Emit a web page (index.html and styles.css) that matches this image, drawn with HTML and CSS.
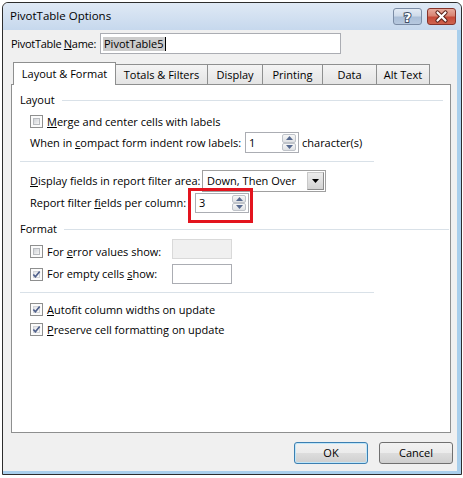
FILE: index.html
```html
<!DOCTYPE html>
<html>
<head>
<meta charset="utf-8">
<title>PivotTable Options</title>
<link rel="stylesheet" href="styles.css">
</head>
<body>
<div class="window">
  <div class="titlebar">
    <span class="title">PivotTable Options</span>
    <div class="caption-btns">
      <div class="cbtn help">
        <svg width="27" height="15" viewBox="0 0 27 15"><text x="13.5" y="12.5" text-anchor="middle" class="help-glyph">?</text></svg>
      </div>
      <div class="cbtn close">
        <svg width="27" height="15" viewBox="0 0 27 15">
          <path d="M9.5 3.5 L17.5 11.5 M17.5 3.5 L9.5 11.5" stroke="#5a2018" stroke-width="4.2" stroke-linecap="round"/>
          <path d="M9.5 3.5 L17.5 11.5 M17.5 3.5 L9.5 11.5" stroke="#ffffff" stroke-width="2.2" stroke-linecap="round"/>
        </svg>
      </div>
    </div>
  </div>
  <div class="client">
    <div class="name-row">
      <span class="name-label">PivotTable <u>N</u>ame:</span>
      <div class="textbox name-box"><span class="sel">PivotTable5</span><span class="caret"></span></div>
    </div>
    <div class="tabs">
      <div class="tab active w-layout">Layout &amp; Format</div>
      <div class="tab w-totals">Totals &amp; Filters</div>
      <div class="tab w-display">Display</div>
      <div class="tab w-printing">Printing</div>
      <div class="tab w-data">Data</div>
      <div class="tab w-alt">Alt Text</div>
    </div>
    <div class="panel">
      <div class="legend legend-layout">Layout</div>
      <div class="check-row r-merge">
        <span class="cb"></span><span><u>M</u>erge and center cells with labels</span>
      </div>
      <div class="field-row r-compact">
        <span class="lbl w-compact">When in <u>c</u>ompact form indent row labels:</span>
        <div class="textbox spin">
          <span class="spin-val">1</span>
          <div class="spin-btns">
            <span class="spin-btn"><svg width="7" height="4" viewBox="0 0 7 4"><path d="M0 4 L3.5 0 L7 4 Z" fill="#56698f"/></svg></span>
            <span class="spin-btn"><svg width="7" height="4" viewBox="0 0 7 4"><path d="M0 0 L3.5 4 L7 0 Z" fill="#56698f"/></svg></span>
          </div>
        </div>
        <span class="after">character(s)</span>
      </div>
      <div class="sep sep-1"></div>
      <div class="field-row r-display">
        <span class="lbl w-display-lbl"><u>D</u>isplay fields in report filter area:</span>
        <div class="combo">
          <span class="combo-val">Down, Then Over</span>
          <span class="combo-btn"><svg width="7" height="4" viewBox="0 0 7 4"><path d="M0 0 L3.5 4 L7 0 Z" fill="#000"/></svg></span>
        </div>
      </div>
      <div class="field-row r-report">
        <span class="lbl w-report">Report filter <u>f</u>ields per column:</span>
        <div class="spin-wrap">
          <div class="textbox spin spin-report">
            <span class="spin-val">3</span>
            <div class="spin-btns">
              <span class="spin-btn"><svg width="7" height="4" viewBox="0 0 7 4"><path d="M0 4 L3.5 0 L7 4 Z" fill="#56698f"/></svg></span>
              <span class="spin-btn"><svg width="7" height="4" viewBox="0 0 7 4"><path d="M0 0 L3.5 4 L7 0 Z" fill="#56698f"/></svg></span>
            </div>
          </div>
          <div class="highlight"></div>
        </div>
      </div>
      <div class="legend legend-format">Format</div>
      <div class="field-row r-error">
        <div class="check-lbl w-fmt shift">
          <span class="cb"></span><span>For <u>e</u>rror values show:</span>
        </div>
        <div class="textbox small-box disabled"></div>
      </div>
      <div class="field-row r-empty">
        <div class="check-lbl w-fmt">
          <span class="cb checked"><svg width="13" height="13" viewBox="0 0 13 13"><path d="M3.3 6.5 L5.4 8.7 L9.7 3.5" fill="none" stroke="#50618c" stroke-width="1.7"/></svg></span><span>For empty cells <u>s</u>how:</span>
        </div>
        <div class="textbox small-box"></div>
      </div>
      <div class="sep sep-2"></div>
      <div class="check-row r-autofit">
        <span class="cb checked"><svg width="13" height="13" viewBox="0 0 13 13"><path d="M3.3 6.5 L5.4 8.7 L9.7 3.5" fill="none" stroke="#50618c" stroke-width="1.7"/></svg></span><span><u>A</u>utofit column widths on update</span>
      </div>
      <div class="check-row r-preserve">
        <span class="cb checked"><svg width="13" height="13" viewBox="0 0 13 13"><path d="M3.3 6.5 L5.4 8.7 L9.7 3.5" fill="none" stroke="#50618c" stroke-width="1.7"/></svg></span><span><u>P</u>reserve cell formatting on update</span>
      </div>
    </div>
    <div class="buttons">
      <button class="btn default">OK</button>
      <button class="btn">Cancel</button>
    </div>
  </div>
</div>
</body>
</html>
```
FILE: styles.css
```css
*, *::before, *::after { box-sizing: border-box; }
html, body { margin: 0; padding: 0; background: #ffffff; }
body {
  font-family: "Open Sans", "Noto Sans", sans-serif;
  font-size: 11px;
  line-height: 14px;
  color: #000;
  white-space: nowrap;
}
u { text-decoration: underline; text-underline-offset: 1px; }

.window {
  margin: 2px 0 0 2px;
  width: 460px;
  height: 473px;
  border: 1px solid #2d2d2d;
  border-radius: 6px 6px 0 0;
  background: #f0f0f0;
  box-shadow: inset -4px -3px 0 #a9cfec;
  display: flex;
  flex-direction: column;
  overflow: hidden;
}

.titlebar {
  flex: none;
  height: 27px;
  display: flex;
  align-items: center;
  justify-content: space-between;
  padding: 0 5px 0 7px;
  background: linear-gradient(#dfe9f5, #c6d8ed);
  border-radius: 5px 5px 0 0;
}
.title { font-size: 11.5px; margin-bottom: 2px; }
.caption-btns { display: flex; gap: 5px; }
.cbtn {
  width: 29px;
  height: 17px;
  border-radius: 3px;
  display: flex;
  align-items: center;
  justify-content: center;
}
.help {
  border: 1px solid #7b8ca5;
  background: linear-gradient(#e3ebf5 0%, #cfdbea 45%, #abbfd8 55%, #b7c9df 100%);
}
.close {
  border: 1px solid #86332a;
  background: linear-gradient(#e8ab9d 0%, #d88473 45%, #c64a38 55%, #cf6450 100%);
}
.help-glyph {
  font-family: "DejaVu Sans", sans-serif;
  font-weight: bold;
  font-size: 13px;
  fill: #ffffff;
  stroke: #3f4f68;
  stroke-width: 2px;
  paint-order: stroke;
}

.client {
  flex: 1;
  display: flex;
  flex-direction: column;
  padding: 0 8px;
}

.name-row { display: flex; align-items: center; margin-top: 3px; height: 21px; }
.name-label { width: 89px; flex: none; letter-spacing: -0.3px; }
.textbox { background: #fff; border: 1px solid #abadb3; flex: none; }
.name-box {
  width: 241px;
  height: 21px;
  display: flex;
  align-items: center;
  padding-left: 2px;
}
.sel { background: #cccccc; padding: 0 1px; line-height: 14px; }
.caret { width: 1px; height: 14px; background: #000; }

.tabs {
  display: flex;
  align-items: flex-end;
  margin-top: 8px;
  height: 22px;
  padding-left: 2px;
  position: relative;
  z-index: 1;
}
.tab {
  flex: none;
  height: 20px;
  border: 1px solid #8e8f8f;
  border-bottom: none;
  background: linear-gradient(#f4f4f4, #e4e4e4);
  display: flex;
  align-items: center;
  justify-content: center;
  margin-left: -1px;
}
.tab.active {
  height: 23px;
  margin-bottom: -1px;
  margin-left: 0;
  background: #ffffff;
  position: relative;
  z-index: 2;
}
.w-layout { width: 103px; }
.w-totals { width: 93px; }
.w-display { width: 56px; }
.w-printing { width: 61px; }
.w-data { width: 55px; }
.w-alt { width: 54px; }

.panel {
  width: 440px;
  height: 349px;
  border: 1px solid #8e8f8f;
  background: #ffffff;
  display: flex;
  flex-direction: column;
}

.legend {
  display: flex;
  align-items: center;
  height: 14px;
  padding-left: 8px;
}
.legend::after {
  content: "";
  flex: 1;
  height: 1px;
  background: #d9e1e8;
  margin-left: 7px;
}
.legend-layout { margin-top: 8px; margin-right: 7px; }
.legend-format { margin-top: 9px; margin-right: 1px; }

.check-row { display: flex; align-items: center; height: 13px; padding-left: 18px; }
.check-lbl { display: flex; align-items: center; flex: none; }
.cb {
  width: 13px;
  height: 13px;
  flex: none;
  margin-right: 4px;
  border: 1px solid #8e8f8f;
  background: #fbfbfb;
  padding: 2px;
  position: relative;
}
.cb::before {
  content: "";
  display: block;
  width: 7px;
  height: 7px;
  border: 1px solid #b9bcc0;
  background: linear-gradient(135deg, #cfd2d6, #f6f6f6);
}
.cb.checked::before { background: linear-gradient(135deg, #e2e4e8, #fbfbfb); border-color: #d2d4d8; }
.cb svg { position: absolute; left: -1px; top: -1px; }

.field-row { display: flex; align-items: center; padding-left: 18px; }
.lbl { flex: none; }
.w-compact { width: 215px; }
.w-display-lbl { width: 172px; }
.w-report { width: 165px; }
.w-fmt { width: 142px; }
.shift { margin-top: 5px; }

.r-merge { margin-top: 8px; }
.r-compact { margin-top: 4px; height: 21px; }
.r-display { margin-top: 8px; height: 22px; }
.r-report { margin-top: 1px; height: 20px; }
.r-error { margin-top: 3px; height: 20px; }
.r-empty { margin-top: 5px; height: 20px; }
.r-autofit { margin-top: 10px; }
.r-preserve { margin-top: 7px; }

.sep { height: 1px; background: #d9e1e8; margin-left: 8px; width: 354px; }
.sep-1 { margin-top: 8px; }
.sep-2 { margin-top: 8px; }

.spin {
  width: 54px;
  height: 21px;
  display: flex;
}
.spin-report { height: 20px; }
.spin-val { flex: 1; padding-left: 3px; display: flex; align-items: center; }
.spin-btns {
  width: 16px;
  display: flex;
  flex-direction: column;
  padding: 1px 2px 1px 0;
}
.spin-btn {
  flex: 1;
  border: 1px solid #bfc3c9;
  border-radius: 2px;
  background: linear-gradient(#f7f7f7, #dfe1e4);
  display: flex;
  align-items: center;
  justify-content: center;
}
.after { margin-left: 3px; }

.combo {
  flex: none;
  width: 124px;
  height: 22px;
  display: flex;
  align-items: stretch;
  background: #fff;
  border: 1px solid #a0a0a0;
}
.combo-val { flex: 1; padding-left: 4px; display: flex; align-items: center; }
.combo-btn {
  width: 17px;
  margin: 1px 1px 1px 0;
  border: 1px solid #8b8b8b;
  border-top-color: #c8c8c8;
  border-left-color: #c8c8c8;
  background: linear-gradient(#ececec, #d3d3d3);
  display: flex;
  align-items: center;
  justify-content: center;
}

.spin-wrap { position: relative; flex: none; }
.highlight {
  position: absolute;
  left: -7px;
  top: -5px;
  width: 65px;
  height: 35px;
  border: 3px solid #e3141e;
}

.small-box { width: 60px; height: 20px; }
.disabled { background: #f0f0f0; border-color: #d9d9d9; }

.buttons {
  display: flex;
  justify-content: flex-end;
  gap: 11px;
  margin-top: 9px;
}
.btn {
  width: 74px;
  height: 22px;
  padding: 0;
  font: inherit;
  color: #000;
  border: 1px solid #707070;
  border-radius: 3px;
  background: linear-gradient(#f2f2f2 0%, #ebebeb 50%, #dddddd 50%, #cfcfcf 100%);
}
.btn.default {
  border-color: #3c7fb1;
  box-shadow: inset 0 0 0 1px #bfe6f9;
}
```
